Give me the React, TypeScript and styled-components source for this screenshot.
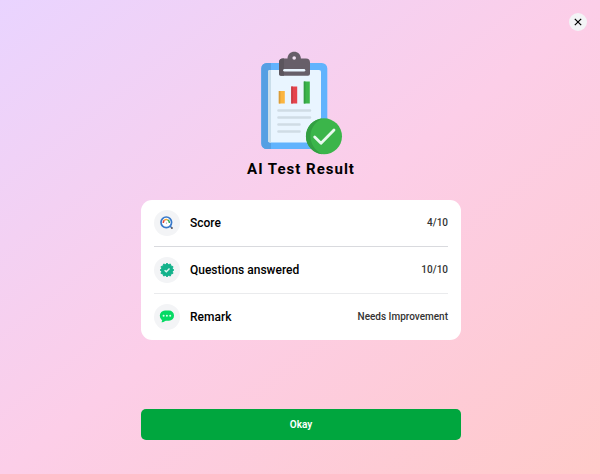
import type { ReactNode } from "react";
import styled, { createGlobalStyle } from "styled-components";

const GlobalStyle = createGlobalStyle`
  * { box-sizing: border-box; }
  body { margin: 0; font-family: Roboto, "Liberation Sans", sans-serif; }
`;

const Page = styled.main`
  display: flex;
  flex-direction: column;
  min-height: 100vh;
  padding: 13px 13px 34px 15px;
  background: linear-gradient(to bottom right in oklab, #e9d4ff 0%, #fccee8 50%, #ffc9c9 100%);
`;

const CloseButton = styled.button`
  display: flex;
  align-items: center;
  justify-content: center;
  align-self: flex-end;
  width: 18px;
  height: 18px;
  padding: 0;
  border: 0;
  border-radius: 50%;
  background: #f3f4f6;
  color: #000;
  cursor: pointer;
`;

const Content = styled.section`
  display: flex;
  flex-direction: column;
  align-items: center;
  width: 100%;
  max-width: 320px;
  margin: 20px auto 0;
`;

const Title = styled.h1`
  margin: 4px 0 21px;
  font-size: 15px;
  line-height: 20px;
  font-weight: 700;
  letter-spacing: 1px;
  color: #000;
`;

const Card = styled.dl`
  width: 100%;
  margin: 0;
  padding: 0 13px;
  border-radius: 11px;
  background: #fff;
`;

const Row = styled.div<{ $line?: string }>`
  display: flex;
  align-items: center;
  justify-content: space-between;
  padding: 10px 0;
  border-bottom: ${({ $line }) => ($line ? `1px solid ${$line}` : "0")};
`;

const Label = styled.dt`
  display: flex;
  align-items: center;
  gap: 10px;
  font-size: 12px;
  line-height: 16px;
  font-weight: 500;
  color: #000;
`;

const IconBadge = styled.span`
  display: flex;
  align-items: center;
  justify-content: center;
  width: 26px;
  height: 26px;
  border-radius: 50%;
  background: #f3f4f6;
`;

const Value = styled.dd`
  margin: 0;
  font-size: 10px;
  line-height: 16px;
  font-weight: 500;
  color: #333;
`;

const OkayButton = styled.button`
  width: 100%;
  height: 31px;
  margin-top: 69px;
  padding: 0;
  border: 0;
  border-radius: 5px;
  background: #00a63e;
  color: #fff;
  font-family: inherit;
  font-size: 10px;
  line-height: 16px;
  font-weight: 600;
  cursor: pointer;
`;

const ReportIcon = () => (
  <svg width="84" height="104" viewBox="-2 0 84 104" aria-hidden="true">
    <rect x="0.3" y="12" width="66" height="86" rx="5.5" fill="#61b3fd" />
    <path d="M5.800 12H10v86H5.800A5.500 5.500 0 0 1 .3 92.500V17.500A5.500 5.500 0 0 1 5.800 12Z" fill="#569fe3" />
    <rect x="7" y="19" width="53" height="72.500" rx="2" fill="#e9f5ff" />
    <path d="M9 19h1v72.500H9a2 2 0 0 1-2-2V21a2 2 0 0 1 2-2Z" fill="#cadeea" />
    <path d="M20 24.800a2 2 0 0 1-2-2V11.500a4 4 0 0 1 4-4h4.500C26.700 3.500 29.600.8 33.200.8s6.500 2.700 6.700 6.700H45a4 4 0 0 1 4 4v11.300a2 2 0 0 1-2 2Z" fill="#675f69" />
    <path d="M20 24.800a2 2 0 0 1-2-2V11.500a4 4 0 0 1 4-4h1v17.300Z" fill="#5b555d" />
    <circle cx="33.200" cy="7" r="1.800" fill="#f2e3f3" />
    <path d="M23.500 19.300h19.500" stroke="#e9f5ff" strokeWidth="2.600" strokeLinecap="round" />
    <path d="M17.800 40h6v12.500h-6Z" fill="#fbb540" />
    <path d="M17.800 40h1.600v12.500h-1.600Z" fill="#d99c39" />
    <path d="M30.200 35.500h6v17h-6Z" fill="#e5444d" />
    <path d="M30.200 35.500h1.600v17h-1.600Z" fill="#c53c45" />
    <path d="M42.800 30.500h6v22h-6Z" fill="#3bb54a" />
    <path d="M42.800 30.500h1.600v22h-1.600Z" fill="#329d42" />
    <path d="M17.500 59.500h31.500M17.500 66.500h31.500M17.500 73.500h21M17.500 80.500h21" stroke="#cfdce5" strokeWidth="2.600" strokeLinecap="round" />
    <circle cx="63" cy="85.300" r="18" fill="#3bb54a" />
    <path d="M61 67.400A18 18 0 0 0 61 103.200C53 99 49.500 92 49.500 85.300S53 71.500 61 67.400Z" fill="#329f42" />
    <path d="m53.700 86 6.300 6.200L73 79" fill="none" stroke="#e9f9ef" strokeWidth="2.800" strokeLinecap="round" strokeLinejoin="round" />
  </svg>
);

const ScoreIcon = () => (
  <svg width="16" height="16" viewBox="0 0 16 16" aria-hidden="true">
    <circle cx="7.300" cy="7.300" r="5.300" fill="#fff" stroke="#3979ca" strokeWidth="1.700" />
    <path d="M4.300 8A3.200 3.200 0 0 1 5.500 5.200" fill="none" stroke="#e34a3c" strokeWidth="1.500" />
    <path d="M5.500 5.200A3.200 3.200 0 0 1 8.700 4.900" fill="none" stroke="#f6a632" strokeWidth="1.500" />
    <path d="M8.700 4.900A3.200 3.200 0 0 1 10.400 8" fill="none" stroke="#34a853" strokeWidth="1.500" />
    <path d="M6.800 8.700 7.500 6.800 8.100 8.700Z" fill="#9ca9bd" />
    <path d="m11 11 1.500 1.500" stroke="#3979ca" strokeWidth="1.500" />
    <circle cx="12.900" cy="12.900" r="1" fill="#53515b" />
  </svg>
);

const sealPoints = Array.from({ length: 24 }, (_, i) => {
  const radius = i % 2 === 0 ? 6.9 : 5.6;
  const angle = (i * Math.PI) / 12;
  return `${(8 + radius * Math.sin(angle)).toFixed(2)},${(8 - radius * Math.cos(angle)).toFixed(2)}`;
}).join(" ");

const VerifiedIcon = () => (
  <svg width="16" height="16" viewBox="0 0 16 16" aria-hidden="true">
    <polygon points={sealPoints} fill="#13b28b" stroke="#13b28b" strokeWidth="0.9" strokeLinejoin="round" />
    <path d="m5.600 8.200 1.700 1.600 3.200-3.200" fill="none" stroke="#e3f9f2" strokeWidth="1.400" />
  </svg>
);

const ChatIcon = () => (
  <svg width="16" height="16" viewBox="0 0 16 16" aria-hidden="true">
    <path d="M6 1.500h4a5 5 0 0 1 5 5v.3a5 5 0 0 1-5 5H7c-1.300 0-2 1.700-4 1.500-.6 0-.6-.5-.2-.9.500-.5.500-1.200 0-1.500A5.200 5.200 0 0 1 .8 6.800 5.300 5.300 0 0 1 6 1.500Z" fill="#06da64" />
    <circle cx="4.600" cy="6.800" r="1" fill="#d9ffe8" />
    <circle cx="7.900" cy="6.800" r="1" fill="#d9ffe8" />
    <circle cx="11.200" cy="6.800" r="1" fill="#d9ffe8" />
  </svg>
);

const results: { label: string; value: string; icon: ReactNode; line?: string }[] = [
  { label: "Score", value: "4/10", icon: <ScoreIcon />, line: "#d9dade" },
  { label: "Questions answered", value: "10/10", icon: <VerifiedIcon />, line: "#eaebed" },
  { label: "Remark", value: "Needs Improvement", icon: <ChatIcon /> },
];

export default function App() {
  return (
    <>
      <GlobalStyle />
      <Page>
        <CloseButton type="button" aria-label="Close">
          <svg width="8" height="8" viewBox="0 0 8 8" aria-hidden="true">
            <path d="m.8.8 6.400 6.400M7.200.8.8 7.200" stroke="currentColor" strokeWidth="1.200" />
          </svg>
        </CloseButton>
        <Content>
          <ReportIcon />
          <Title>AI Test Result</Title>
          <Card>
            {results.map(({ label, value, icon, line }) => (
              <Row key={label} $line={line}>
                <Label>
                  <IconBadge>{icon}</IconBadge>
                  {label}
                </Label>
                <Value>{value}</Value>
              </Row>
            ))}
          </Card>
          <OkayButton type="button">Okay</OkayButton>
        </Content>
      </Page>
    </>
  );
}
